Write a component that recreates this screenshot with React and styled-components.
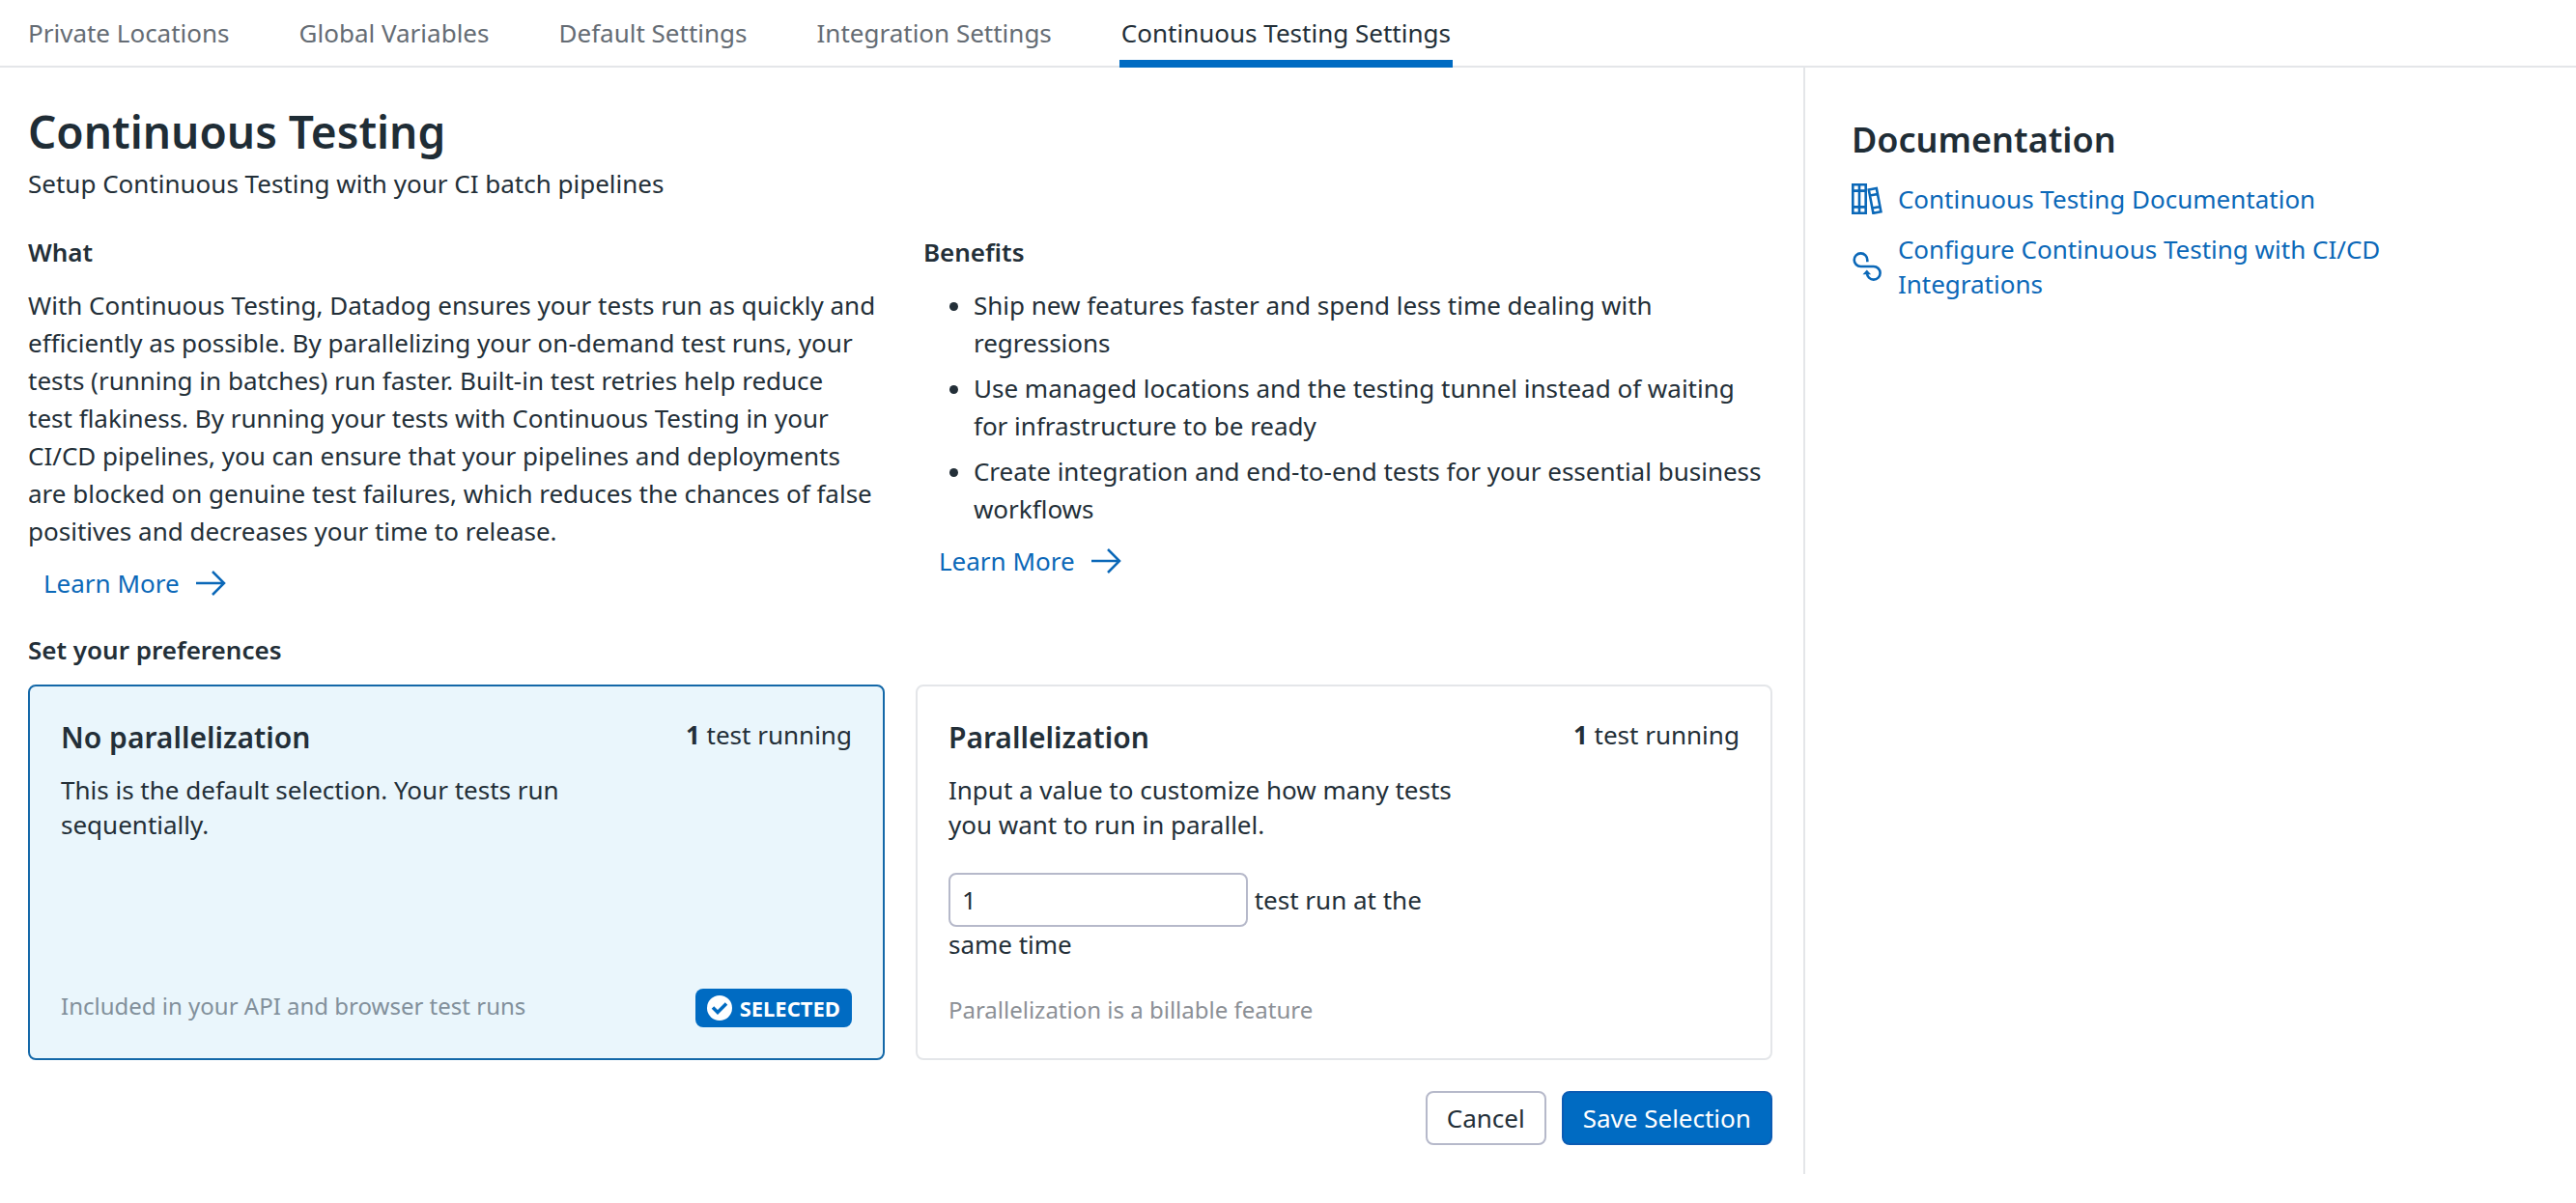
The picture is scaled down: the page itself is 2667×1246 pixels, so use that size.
import React, { useState } from "react";
import styled, { createGlobalStyle } from "styled-components";

const color = {
  text: "#232f38",
  heading: "#1f2d36",
  muted: "#656c74",
  faint: "#8c9096",
  faintBlue: "#82909b",
  line: "#e4e6e9",
  control: "#b6b9ca",
  primary: "#006bc2",
  link: "#0b68b8",
  selectedBg: "#eaf6fc",
  selectedLine: "#1468a8",
};

const GlobalStyle = createGlobalStyle`
  *, *::before, *::after { box-sizing: border-box; }
  body {
    margin: 0;
    background: #fff;
    color: ${color.text};
    font-family: "Noto Sans", sans-serif;
    font-size: 26px;
    line-height: 36px;
  }
  h1, h2, h3, p, ul { margin: 0; padding: 0; }
  button, input { font: inherit; color: inherit; }
`;

const Tabs = styled.nav`
  display: flex;
  gap: 68px;
  padding: 0 27px;
  box-shadow: inset 0 -2px ${color.line};
`;

const Tab = styled.a`
  height: 70px;
  padding: 0 2px;
  line-height: 68px;
  text-decoration: none;
  white-space: nowrap;
  color: ${(p) => (p.$active ? color.text : color.muted)};
  box-shadow: ${(p) => (p.$active ? `inset 0 -8px ${color.primary}` : "none")};
`;

const Page = styled.div`
  display: flex;
  align-items: stretch;
`;

const Main = styled.main`
  width: 70%;
  padding: 40px 32px 30px 29px;
`;

const Title = styled.h1`
  font-size: 46px;
  line-height: 52px;
  font-weight: 600;
  color: ${color.heading};
`;

const Subtitle = styled.p`
  margin-top: 8px;
  line-height: 40px;
`;

const Overview = styled.div`
  display: grid;
  grid-template-columns: 1fr 1fr;
  gap: 48px;
  margin-top: 33px;
`;

const SectionTitle = styled.h2`
  font-size: 26px;
  line-height: 36px;
  font-weight: 600;
`;

const Body = styled.div`
  && { margin: 18px 0 7px; }
  line-height: 39px;
`;

const List = styled.ul`
  && { padding-left: 52px; }
  li + li { margin-top: 8px; }
`;

const LearnMore = styled.a`
  display: inline-flex;
  align-items: center;
  gap: 16px;
  height: 54px;
  padding: 0 16px;
  color: ${color.link};
  text-decoration: none;
`;

const Preferences = styled.section`
  margin-top: 24px;
`;

const Cards = styled.div`
  display: grid;
  grid-template-columns: 1fr 1fr;
  gap: 32px;
  margin-top: 18px;
`;

const Card = styled.article`
  display: flex;
  flex-direction: column;
  padding: 32px;
  border: 2px solid ${(p) => (p.$selected ? color.selectedLine : color.line)};
  border-radius: 8px;
  background: ${(p) => (p.$selected ? color.selectedBg : "#fff")};
`;

const CardHead = styled.div`
  display: flex;
  justify-content: space-between;
  align-items: flex-start;
`;

const CardTitle = styled.h3`
  font-size: 30px;
  line-height: 41px;
  font-weight: 600;
`;

const CardText = styled.p`
  width: 65%;
  margin-top: 16px;
`;

const Field = styled.label`
  display: block;
  width: 65%;
  margin-top: 32px;
`;

const NumberInput = styled.input`
  width: 310px;
  height: 56px;
  padding: 0 12px;
  border: 2px solid ${color.control};
  border-radius: 8px;
  background: #fff;
`;

const CardFoot = styled.div`
  display: flex;
  justify-content: space-between;
  align-items: flex-start;
  margin-top: auto;
  padding-top: 32px;
`;

const Note = styled.p`
  font-size: 24px;
  color: ${(p) => (p.$selected ? color.faintBlue : color.faint)};
`;

const Badge = styled.span`
  display: flex;
  align-items: center;
  gap: 8px;
  height: 40px;
  padding: 0 12px;
  border-radius: 8px;
  background: ${color.primary};
  color: #fff;
  font-size: 22px;
  font-weight: 700;
`;

const Actions = styled.div`
  display: flex;
  justify-content: flex-end;
  gap: 16px;
  margin-top: 32px;
`;

const Button = styled.button`
  height: 56px;
  padding: 0 20px;
  border: 2px solid ${(p) => (p.$primary ? "#0b5cb4" : color.control)};
  border-radius: 8px;
  background: ${(p) => (p.$primary ? color.primary : "#fff")};
  color: ${(p) => (p.$primary ? "#fff" : color.text)};
`;

const Sidebar = styled.aside`
  flex: 1;
  padding: 48px;
  border-left: 2px solid ${color.line};
`;

const SidebarTitle = styled.h2`
  font-size: 36px;
  line-height: 54px;
  font-weight: 600;
  color: ${color.heading};
`;

const DocLink = styled.a`
  display: flex;
  align-items: center;
  gap: 16px;
  margin-top: 16px;
  color: ${color.link};
  text-decoration: none;
  svg { flex: none; }
`;

const Arrow = () => (
  <svg width="32" height="28" viewBox="0 0 32 28" fill="none" stroke="currentColor" strokeWidth="2.500" aria-hidden="true">
    <path d="M1 14h29M18 2l12 12-12 12" />
  </svg>
);

const Check = () => (
  <svg width="26" height="26" viewBox="0 0 26 26" aria-hidden="true">
    <circle cx="13" cy="13" r="13" fill="#fff" />
    <path d="M6 12.500l5 5 9-9" fill="none" stroke={color.primary} strokeWidth="3.500" />
  </svg>
);

const Books = () => (
  <svg width="32" height="32" viewBox="0 0 32 32" fill="none" stroke="currentColor" strokeWidth="2.600" aria-hidden="true">
    <path d="M1.300 1.300h13.400v29.400H1.300zM8 1.300v29.400M1.300 7.600h13.400M1.300 24.400h13.400" />
    <path d="M17.800 6.600l8-1.600 4.600 24.200-8 1.600zM19 12.600l8-1.600M21.600 25.600l8-1.600" />
  </svg>
);

const Flow = () => (
  <svg width="32" height="32" viewBox="0 0 32 32" fill="none" stroke="currentColor" strokeWidth="2.600" aria-hidden="true">
    <path d="M16.300 11.300V9.200A6.800 6.800 0 1 0 9.500 16h13.300A6.800 6.800 0 1 1 16 22.800" />
    <path d="M11.500 24.300l4.300-4.800 4.300 4.800z" fill="currentColor" stroke="none" />
  </svg>
);

const tabs = [
  "Private Locations",
  "Global Variables",
  "Default Settings",
  "Integration Settings",
  "Continuous Testing Settings",
];

const benefits = [
  "Ship new features faster and spend less time dealing with regressions",
  "Use managed locations and the testing tunnel instead of waiting for infrastructure to be ready",
  "Create integration and end-to-end tests for your essential business workflows",
];

export default function App() {
  const [parallel, setParallel] = useState("1");
  return (
    <>
      <GlobalStyle />
      <Tabs>
        {tabs.map((tab, i) => (
          <Tab key={tab} href="#" $active={i === 4} aria-current={i === 4 ? "page" : undefined}>
            {tab}
          </Tab>
        ))}
      </Tabs>
      <Page>
        <Main>
          <Title>Continuous Testing</Title>
          <Subtitle>Setup Continuous Testing with your CI batch pipelines</Subtitle>
          <Overview>
            <section>
              <SectionTitle>What</SectionTitle>
              <Body as="p">
                With Continuous Testing, Datadog ensures your tests run as quickly and efficiently as
                possible. By parallelizing your on-demand test runs, your tests (running in batches)
                run faster. Built-in test retries help reduce test&nbsp;flakiness. By running your
                tests with Continuous Testing in your CI/CD pipelines, you can ensure that your
                pipelines and deployments are blocked on genuine test failures, which reduces the
                chances of false positives and decreases your time to release.
              </Body>
              <LearnMore href="#">
                Learn More <Arrow />
              </LearnMore>
            </section>
            <section>
              <SectionTitle>Benefits</SectionTitle>
              <Body>
                <List>
                  {benefits.map((b) => (
                    <li key={b}>{b}</li>
                  ))}
                </List>
              </Body>
              <LearnMore href="#">
                Learn More <Arrow />
              </LearnMore>
            </section>
          </Overview>
          <Preferences>
            <SectionTitle>Set your preferences</SectionTitle>
            <Cards>
              <Card $selected>
                <CardHead>
                  <CardTitle>No parallelization</CardTitle>
                  <span>
                    <b>1</b> test running
                  </span>
                </CardHead>
                <CardText>This is the default selection. Your tests run sequentially.</CardText>
                <CardFoot>
                  <Note $selected>Included in your API and browser test runs</Note>
                  <Badge>
                    <Check /> SELECTED
                  </Badge>
                </CardFoot>
              </Card>
              <Card>
                <CardHead>
                  <CardTitle>Parallelization</CardTitle>
                  <span>
                    <b>1</b> test running
                  </span>
                </CardHead>
                <CardText>Input a value to customize how many tests you want to run in parallel.</CardText>
                <Field>
                  <NumberInput value={parallel} onChange={(e) => setParallel(e.target.value)} /> test
                  run at the same time
                </Field>
                <CardFoot>
                  <Note>Parallelization is a billable feature</Note>
                </CardFoot>
              </Card>
            </Cards>
          </Preferences>
          <Actions>
            <Button type="button">Cancel</Button>
            <Button type="button" $primary>
              Save Selection
            </Button>
          </Actions>
        </Main>
        <Sidebar>
          <SidebarTitle>Documentation</SidebarTitle>
          <DocLink href="#">
            <Books /> Continuous Testing Documentation
          </DocLink>
          <DocLink href="#">
            <Flow /> Configure Continuous Testing with CI/CD Integrations
          </DocLink>
        </Sidebar>
      </Page>
    </>
  );
}
